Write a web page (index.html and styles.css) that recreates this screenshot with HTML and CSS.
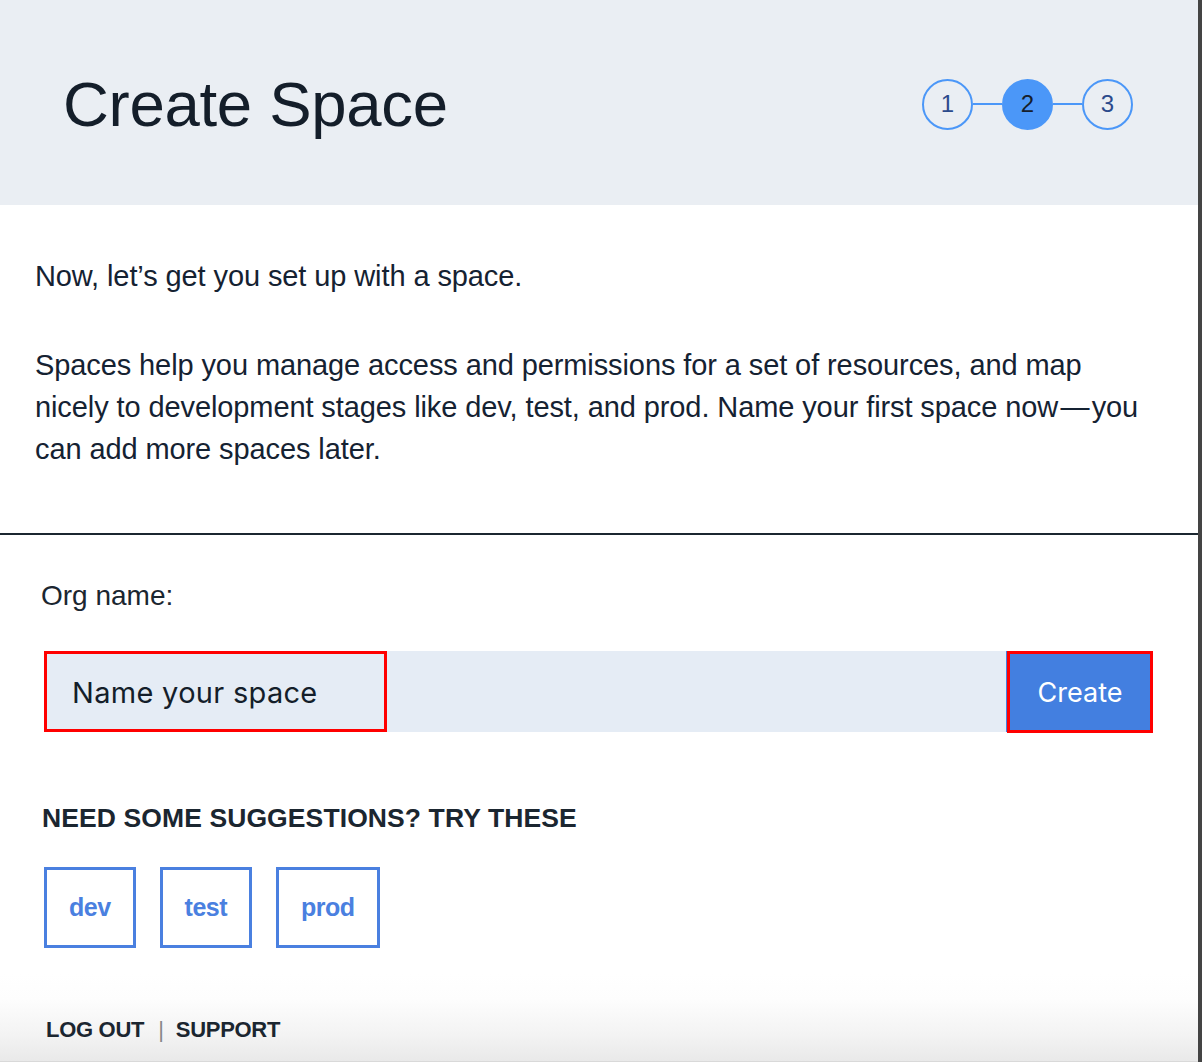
FILE: index.html
```html
<!DOCTYPE html>
<html lang="en">
<head>
<meta charset="utf-8">
<title>Create Space</title>
<link rel="stylesheet" href="styles.css">
</head>
<body>
<div class="page">
  <header class="header">
    <h1 class="title">Create Space</h1>
    <ol class="steps">
      <li class="step">1</li>
      <li class="connector"></li>
      <li class="step step-active">2</li>
      <li class="connector"></li>
      <li class="step">3</li>
    </ol>
  </header>

  <section class="intro">
    <p class="lead">Now, let’s get you set up with a space.</p>
    <p class="body">Spaces help you manage access and permissions for a set of resources, and map nicely to development stages like dev, test, and prod. Name your first space now&#8288;&#8202;&#8288;—&#8288;&#8202;&#8288;you can add more spaces later.</p>
  </section>

  <section class="form">
    <label class="label">Org name:</label>
    <div class="field-row">
      <div class="field-input">Name your space</div>
      <div class="field-fill"></div>
      <button class="create-btn">Create</button>
    </div>

    <h2 class="suggest-title">NEED SOME SUGGESTIONS? TRY THESE</h2>
    <div class="chips">
      <button class="chip">dev</button>
      <button class="chip">test</button>
      <button class="chip">prod</button>
    </div>
  </section>

  <footer class="footer">
    <a class="foot-link">LOG OUT</a>
    <span class="foot-sep">|</span>
    <a class="foot-link">SUPPORT</a>
  </footer>
</div>
</body>
</html>
```

FILE: styles.css
```css
* { box-sizing: border-box; }

html, body {
  margin: 0;
  padding: 0;
  height: 100%;
}

body {
  background: #444444;
  font-family: "Liberation Sans", Arial, sans-serif;
  color: #152232;
  overflow: hidden;
}

.page {
  width: 1198px;
  height: 1062px;
  background: #ffffff;
  display: flex;
  flex-direction: column;
}

/* Header */
.header {
  height: 205px;
  background: #eaeef3;
  display: flex;
  align-items: center;
  justify-content: space-between;
  padding: 3px 65px 0 63px;
}

.title {
  margin: 0;
  font-size: 63.5px;
  font-weight: 400;
  color: #141e2a;
  letter-spacing: -0.3px;
}

.steps {
  list-style: none;
  margin: 0;
  padding: 0;
  display: flex;
  align-items: center;
}

.step {
  width: 51px;
  height: 51px;
  border-radius: 50%;
  border: 2px solid #4b97f8;
  display: flex;
  align-items: center;
  justify-content: center;
  font-size: 24px;
  color: #2b4a8c;
  background: transparent;
}

.step-active {
  background: #4b97f8;
  color: #16202c;
}

.connector {
  width: 29px;
  height: 2px;
  background: #4b97f8;
}

/* Intro */
.intro {
  padding: 50px 35px 63px 35px;
  border-bottom: 2px solid #1b2630;
}

.intro p {
  margin: 0;
  font-size: 29px;
  line-height: 42px;
  color: #152232;
  letter-spacing: -0.1px;
}

.intro .lead {
  margin-bottom: 47px;
}

.intro .body {
  max-width: 1108px;
}

/* Form */
.form {
  padding: 40px 45px 0 44px;
}

.label {
  display: block;
  margin-left: -3px;
  font-size: 28px;
  line-height: 42px;
  color: #1b2630;
}

.field-row {
  margin-top: 34px;
  display: flex;
  height: 81px;
  background: #e5ecf5;
}

.field-input {
  width: 343px;
  border: 3px solid #ff0000;
  display: flex;
  align-items: center;
  padding-left: 25px;
  padding-top: 2px;
  font-family: Inter, "Noto Sans", sans-serif;
  font-size: 29px;
  letter-spacing: 0.3px;
  color: #141e2a;
}

.field-fill {
  flex: 1;
  border-right: 1px solid #437fe0;
}

.create-btn {
  width: 146px;
  height: 82px;
  margin: 0;
  border: 3px solid #ff0000;
  background: #437fe0;
  color: #ffffff;
  font-family: Inter, "Noto Sans", sans-serif;
  font-size: 27px;
  padding: 0;
}

.suggest-title {
  margin: 70px 0 0 -2px;
  font-size: 26.5px;
  line-height: 32px;
  font-weight: 700;
  color: #1b2630;
  letter-spacing: 0.1px;
}

.chips {
  margin-top: 33px;
  display: flex;
  gap: 24px;
}

.chip {
  height: 81px;
  padding: 0 22px;
  border: 3px solid #4a80e0;
  background: #ffffff;
  color: #4a80e0;
  font-family: "Liberation Sans", Arial, sans-serif;
  font-size: 25px;
  font-weight: 700;
  letter-spacing: -0.5px;
}

/* Footer */
.footer {
  margin-top: auto;
  height: 88px;
  padding: 0 0 18px 46px;
  display: flex;
  align-items: flex-end;
  background: linear-gradient(to bottom, #ffffff 0%, #fdfdfd 30%, #f3f3f3 70%, #e9e9e9 100%);
  border-bottom: 1px solid #d9d9d9;
}

.foot-link {
  font-size: 22px;
  font-weight: 700;
  color: #1b2630;
  letter-spacing: -0.3px;
  line-height: 26px;
}

.foot-sep {
  margin: 0 12px 0 14px;
  font-size: 22px;
  line-height: 26px;
  color: #888888;
}
```
